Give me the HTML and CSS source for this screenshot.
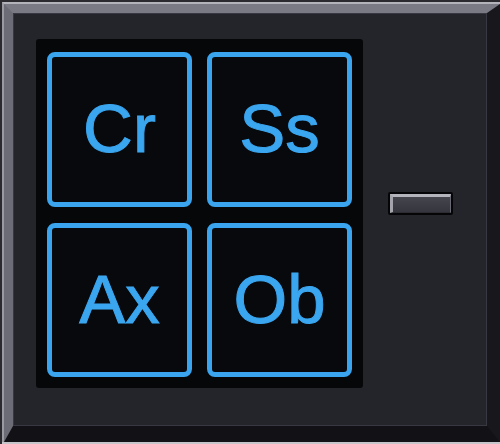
FILE: index.html
```html
<!DOCTYPE html>
<html>
<head>
<meta charset="utf-8">
<link rel="stylesheet" href="styles.css">
</head>
<body>
<div class="frame">
  <div class="bevel">
    <div class="panel">
      <div class="screen">
        <div class="tile">Cr</div>
        <div class="tile">Ss</div>
        <div class="tile">Ax</div>
        <div class="tile">Ob</div>
      </div>
      <div class="button"></div>
    </div>
  </div>
</div>
</body>
</html>
```
FILE: styles.css
```css
html, body {
  margin: 0;
  padding: 0;
  background: #2a2a2f;
  width: 500px;
  height: 444px;
  overflow: hidden;
}
.frame {
  margin: 2px 0 0 2px;
  width: 498px;
  box-sizing: border-box;
  border-top: 2px solid #b3b3bb;
  border-left: 2px solid #9a9aa3;
  box-shadow: 0 2px 0 #c6c6ca;
}
.bevel {
  border-top: 9px solid #7a7a85;
  border-left: 9px solid #6c6c76;
  border-right: 13px solid #17171c;
  border-bottom: 16px solid #121216;
}
.panel {
  height: 413px;
  box-sizing: border-box;
  background: #24242b;
  box-shadow: inset 0 0 0 1px #383842;
  display: flex;
  align-items: flex-start;
  padding: 26px 0 0 23px;
}
.screen {
  width: 327px;
  height: 349px;
  box-sizing: border-box;
  background: #060709;
  border-radius: 3px;
  padding: 13px 11px 11px 11px;
  display: grid;
  grid-template-columns: 145px 145px;
  grid-template-rows: 155px 154px;
  column-gap: 15px;
  row-gap: 16px;
}
.tile {
  box-sizing: border-box;
  border: 5px solid #3aa4ee;
  border-radius: 8px;
  background: #08090c;
  display: flex;
  align-items: center;
  justify-content: center;
  color: #3ba6f0;
  font-family: "Liberation Sans", Arial, sans-serif;
  font-size: 69px;
  line-height: 1;
  padding-bottom: 2px;
  -webkit-text-stroke: 1px #3ba6f0;
}
.button {
  margin: 153px 0 0 25px;
  width: 65px;
  height: 23px;
  box-sizing: border-box;
  border: 2px solid #050507;
  border-radius: 2px;
  background: #050507;
}
.button::before {
  content: "";
  display: block;
  height: 100%;
  box-sizing: border-box;
  border-top: 3px solid #b4b4bd;
  border-left: 3px solid #a4a4ad;
  border-right: 1px solid #6a6a74;
  border-bottom: 1px solid #2c2c33;
  background: linear-gradient(#45454e, #35353d);
}
```
